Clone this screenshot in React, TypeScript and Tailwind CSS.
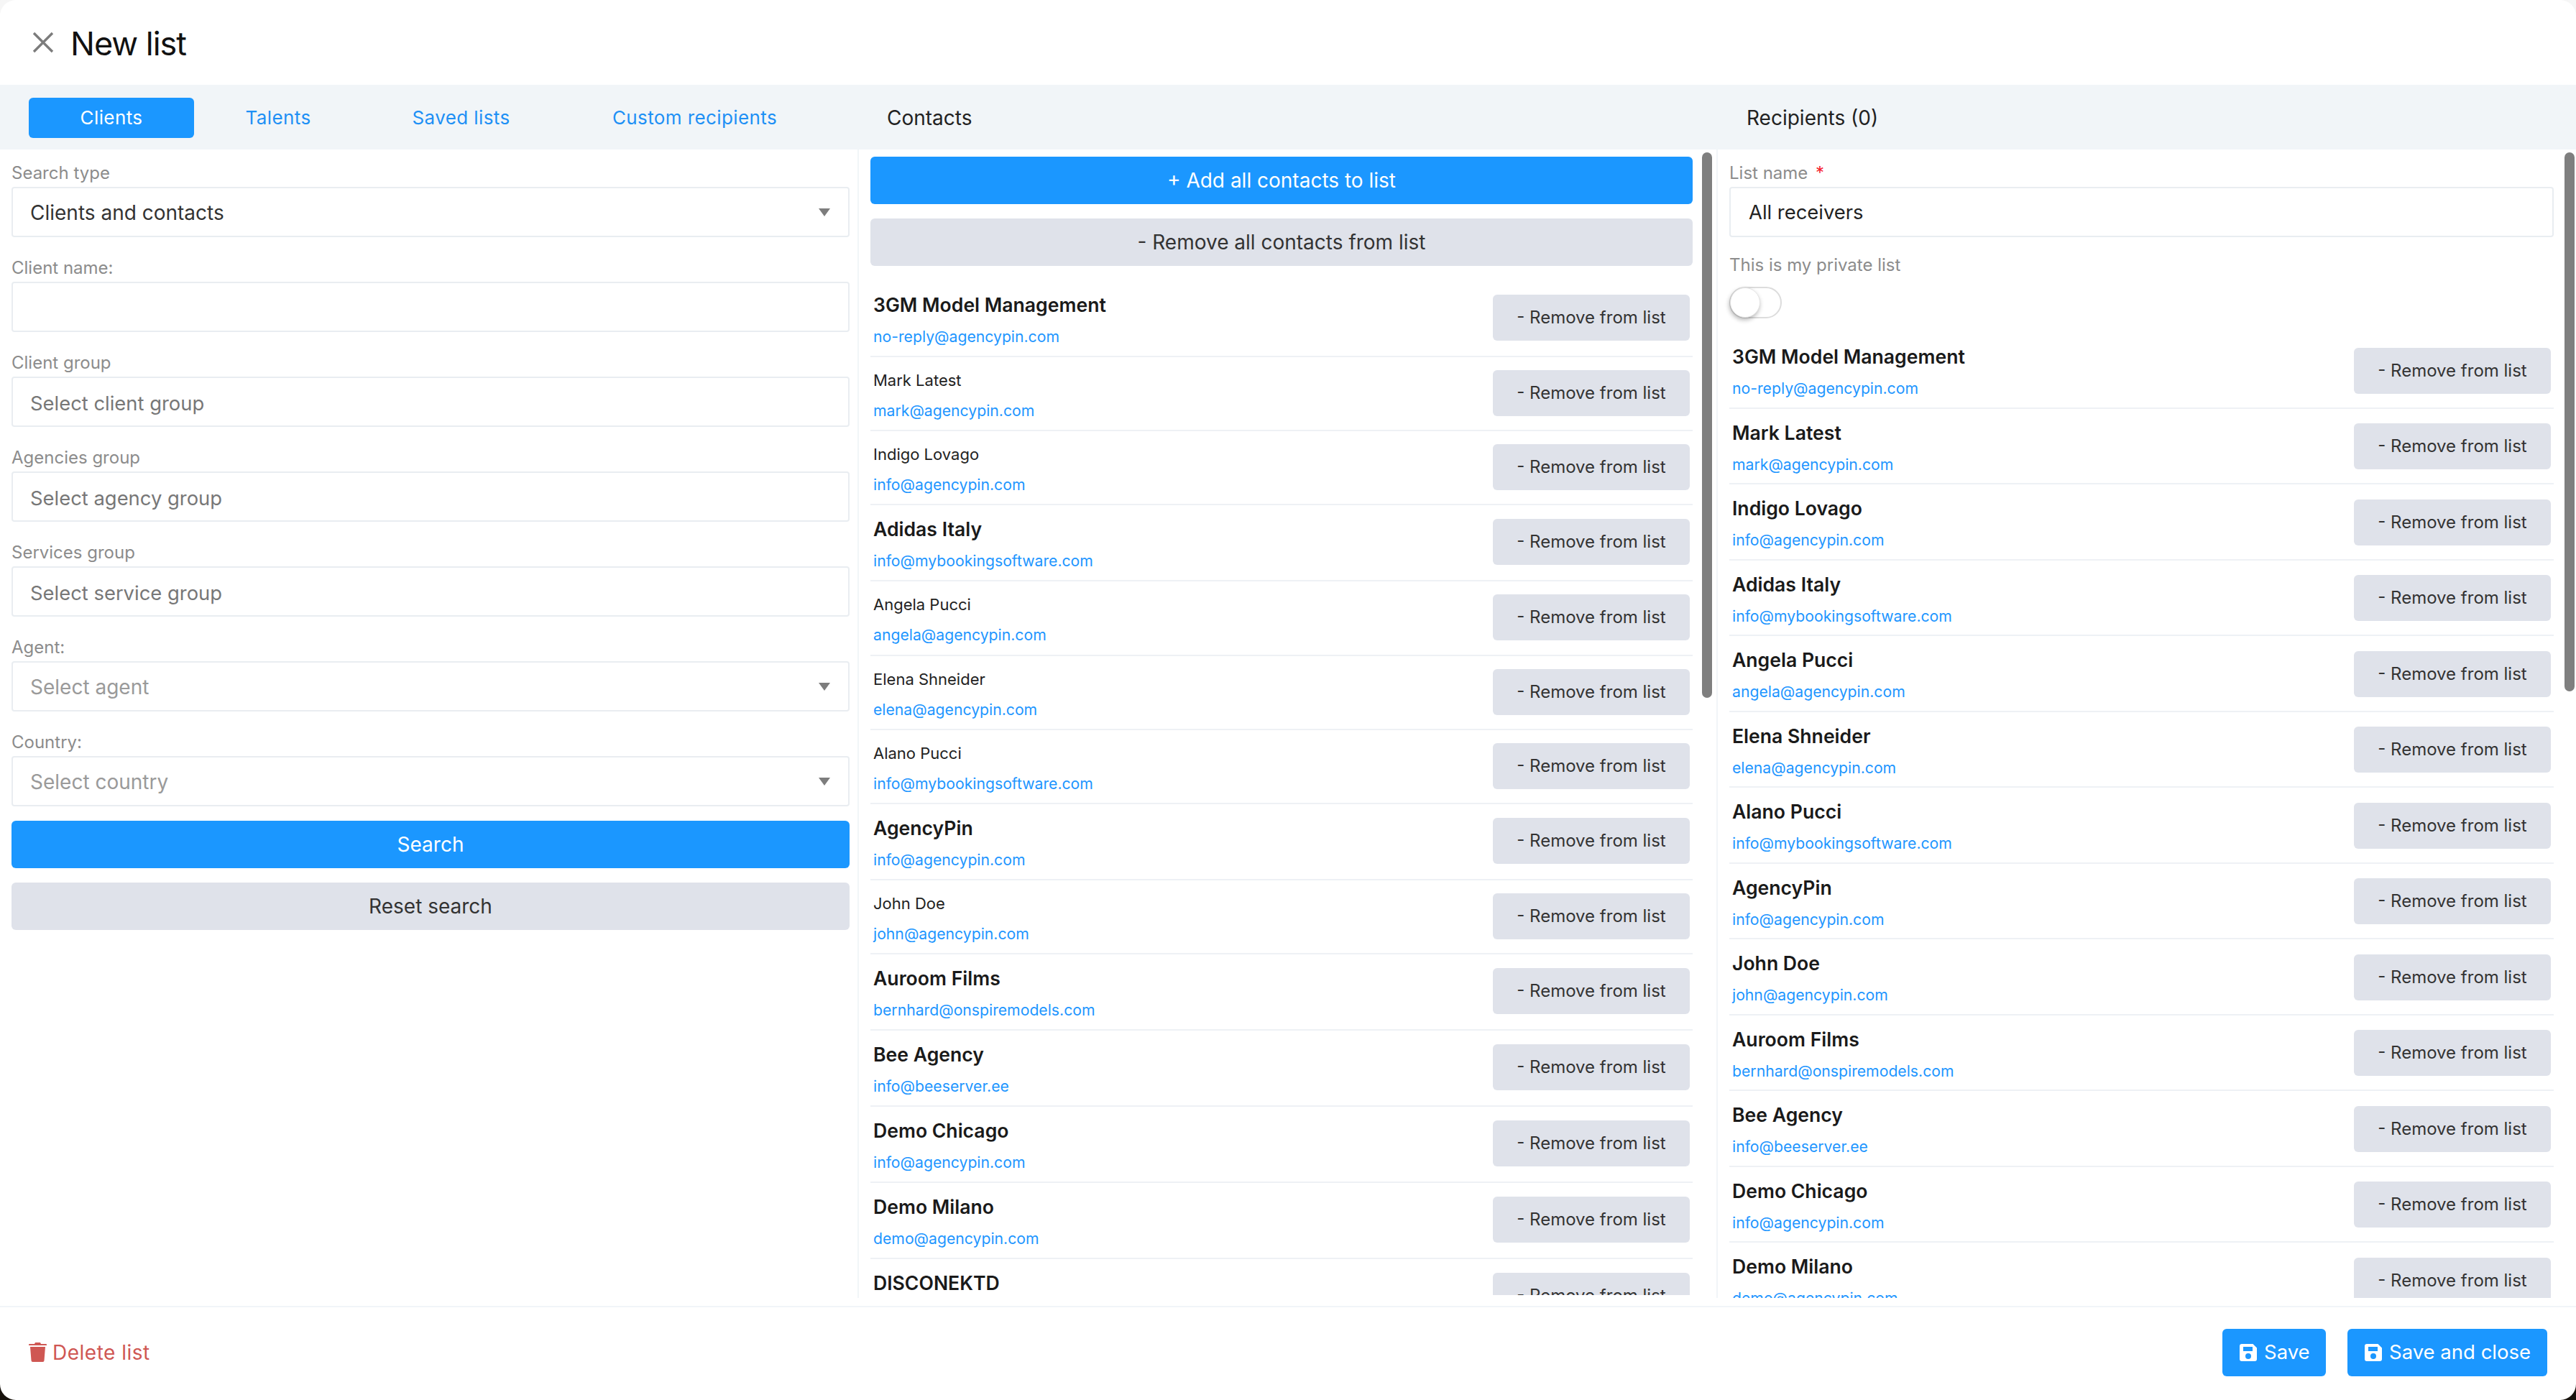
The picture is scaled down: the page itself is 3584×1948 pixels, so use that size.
const contacts = [
  { name: "3GM Model Management", email: "no-reply@agencypin.com", bold: true },
  { name: "Mark Latest", email: "mark@agencypin.com", bold: false },
  { name: "Indigo Lovago", email: "info@agencypin.com", bold: false },
  { name: "Adidas Italy", email: "info@mybookingsoftware.com", bold: true },
  { name: "Angela Pucci", email: "angela@agencypin.com", bold: false },
  { name: "Elena Shneider", email: "elena@agencypin.com", bold: false },
  { name: "Alano Pucci", email: "info@mybookingsoftware.com", bold: false },
  { name: "AgencyPin", email: "info@agencypin.com", bold: true },
  { name: "John Doe", email: "john@agencypin.com", bold: false },
  { name: "Auroom Films", email: "bernhard@onspiremodels.com", bold: true },
  { name: "Bee Agency", email: "info@beeserver.ee", bold: true },
  { name: "Demo Chicago", email: "info@agencypin.com", bold: true },
  { name: "Demo Milano", email: "demo@agencypin.com", bold: true },
  { name: "DISCONEKTD", email: "info@agencypin.com", bold: true },
];

function Arrow() {
  return (
    <svg className="h-[11px] w-[16px] shrink-0" viewBox="0 0 16 11">
      <path d="M0 0h16L8 11z" fill="#7d7d7d" />
    </svg>
  );
}

function SaveIcon() {
  return (
    <svg className="h-[24px] w-[24px] shrink-0" viewBox="0 0 24 24">
      <path
        fillRule="evenodd"
        d="M3 0h15.5L24 5.5V21a3 3 0 0 1-3 3H3a3 3 0 0 1-3-3V3a3 3 0 0 1 3-3zM5 4v6h13V4zM12 13a4 4 0 1 0 0 8 4 4 0 0 0 0-8z"
        fill="#ffffff"
      />
    </svg>
  );
}

function TrashIcon() {
  return (
    <svg className="h-[27px] w-[25px] shrink-0" viewBox="0 0 25 27">
      <path
        d="M9 0h7l1 2h7a1 1 0 0 1 1 1v1H0V3a1 1 0 0 1 1-1h7zM2 6h21l-1.5 19a2 2 0 0 1-2 2h-14a2 2 0 0 1-2-2z"
        fill="#cf5753"
      />
    </svg>
  );
}

function Field({
  label,
  value,
  tone = "placeholder",
  arrow = false,
}: {
  label: string;
  value?: string;
  tone?: "value" | "placeholder" | "muted";
  arrow?: boolean;
}) {
  const color =
    tone === "value" ? "text-[#333333]" : tone === "muted" ? "text-[#9a9a9a]" : "text-[#777777]";
  return (
    <div className="mb-[28px]">
      <div className="mb-[4px] h-[30px] text-[24px] leading-[30px] text-[#8c8c8c]">{label}</div>
      <div className="flex h-[70px] items-center justify-between rounded-[4px] border-2 border-[#e9edf1] bg-white pl-[24px] pr-[25px]">
        <span className={`leading-[34px] ${color} ${arrow ? "pt-[1px] text-[28px]" : "pt-[3px] text-[27.4px]"}`}>
          {value}
        </span>
        {arrow && <Arrow />}
      </div>
    </div>
  );
}

function ContactRow({
  name,
  email,
  bold,
  compact = false,
}: {
  name: string;
  email: string;
  bold: boolean;
  compact?: boolean;
}) {
  const padding = bold ? (compact ? "pb-[2.5px] pt-[13px]" : "pb-[3px] pt-[13px]") : "pb-[3.2px] pt-[14px]";
  return (
    <div className={`flex items-center justify-between border-b-2 border-[#eef1f5] px-[4px] ${padding}`}>
      <div className="min-w-0">
        {bold ? (
          <div className="text-[26.6px] font-semibold leading-[40px] text-[#1a1a1a]">{name}</div>
        ) : (
          <div className="text-[22px] leading-[36px] text-[#222222]">{name}</div>
        )}
        <div className="text-[21.2px] leading-[48px] text-[#1e96ff]">{email}</div>
      </div>
      <button
        className={`flex h-[64px] w-[274px] shrink-0 items-center justify-center rounded-[6px] bg-[#dfe2ea] text-[24px] text-[#333333] ${compact ? "mb-[9px]" : "mb-[12px]"}`}
      >
        - Remove from list
      </button>
    </div>
  );
}

export default function App() {
  return (
    <div className="h-[1948px] w-[3584px] overflow-hidden bg-linear-to-b from-[#f6f6f6] from-50% to-[#17120c] to-50%">
      <div
        className="flex h-full flex-col rounded-[22px] bg-white"
        style={{ fontFamily: "Inter, 'Noto Sans', sans-serif" }}
      >
        <header className="flex h-[118px] shrink-0 items-center pl-[45px]">
          <svg className="h-[30px] w-[30px]" viewBox="0 0 30 30">
            <path d="M2 2l26 26M28 2L2 28" stroke="#7c7c7c" strokeWidth="3.4" fill="none" />
          </svg>
          <h1 className="ml-[23px] mt-[3px] text-[45px] font-normal leading-[56px] tracking-[-1px] text-[#111111]">
            New list
          </h1>
        </header>

        <div className="flex h-[90px] shrink-0 items-center bg-[#f1f5f8]">
          <nav className="mt-[1px] flex w-[1234px] shrink-0 gap-[2px] pl-[40px] text-[26px] tracking-[0.4px]">
            <button className="flex h-[56px] w-[230px] items-center justify-center rounded-[6px] bg-[#1b97ff] text-white">
              Clients
            </button>
            <button className="flex h-[56px] w-[230px] items-center justify-center text-[#1e90f5]">Talents</button>
            <button className="flex h-[56px] w-[275px] items-center justify-center text-[#1e90f5]">Saved lists</button>
            <button className="flex h-[56px] w-[371px] items-center justify-center text-[#1e90f5]">
              Custom recipients
            </button>
          </nav>
          <div className="mt-[2px] w-[1196px] shrink-0 text-[28px] text-[#222222]">Contacts</div>
          <div className="mt-[2px] text-[28px] text-[#222222]">Recipients (0)</div>
        </div>

        <main className="flex h-[1598px] shrink-0">
          <section className="w-[1195px] shrink-0 border-r-2 border-[#f1f5f8] pl-[16px] pr-[11px] pt-[18px]">
            <Field label="Search type" value="Clients and contacts" tone="value" arrow />
            <Field label="Client name:" />
            <Field label="Client group" value="Select client group" />
            <Field label="Agencies group" value="Select agency group" />
            <Field label="Services group" value="Select service group" />
            <Field label="Agent:" value="Select agent" tone="muted" arrow />
            <div className="-mb-[8px]">
              <Field label="Country:" value="Select country" tone="muted" arrow />
            </div>
            <button className="flex h-[66px] w-full items-center justify-center rounded-[6px] bg-[#1b97ff] text-[28px] text-white">
              Search
            </button>
            <button className="mt-[20px] flex h-[66px] w-full items-center justify-center rounded-[6px] bg-[#dfe2ea] text-[28px] text-[#333333]">
              Reset search
            </button>
          </section>

          <section className="flex h-[1594px] w-[1193px] shrink-0 overflow-hidden pl-[16px]">
            <div className="w-[1144px] shrink-0 pt-[10px]">
              <button className="flex h-[66px] w-full items-center justify-center rounded-[6px] bg-[#1b97ff] text-[28px] text-white">
                + Add all contacts to list
              </button>
              <button className="mt-[20px] flex h-[66px] w-full items-center justify-center rounded-[6px] bg-[#dfe2ea] text-[28px] text-[#333333]">
                - Remove all contacts from list
              </button>
              <div className="mt-[21px]">
                {contacts.map((c) => (
                  <ContactRow key={c.name} {...c} />
                ))}
              </div>
            </div>
            <div className="ml-[13px] mt-[4px] h-[759px] w-[14px] shrink-0 rounded-full bg-[#7f7f7f]" />
          </section>

          <section className="flex flex-1 overflow-hidden border-l-2 border-[#f1f5f8] pl-[16px]">
            <div className="w-[1147px] shrink-0 pt-[18px]">
              <div className="mb-[4px] h-[30px] text-[24px] leading-[30px] text-[#8c8c8c]">
                List name <span className="ml-[4px] text-[#f5222d]">*</span>
              </div>
              <div className="flex h-[70px] items-center rounded-[4px] border-2 border-[#e9edf1] pl-[25px] pt-[2px] text-[27.4px] text-[#222222]">
                All receivers
              </div>
              <div className="mt-[24px] h-[30px] text-[24px] leading-[30px] text-[#8c8c8c]">This is my private list</div>
              <div className="relative mt-[15px] h-[44px] w-[73px] rounded-full border-2 border-[#dcdcdc]">
                <div className="absolute -left-[1px] -top-[1px] h-[42px] w-[42px] rounded-full border border-[#e4e4e4] bg-white shadow-[-1px_3px_6px_rgba(0,0,0,0.3)]" />
              </div>
              <div className="mt-[20px]">
                {contacts.map((c) => (
                  <ContactRow key={c.name} {...c} bold compact />
                ))}
              </div>
            </div>
            <div className="ml-[15px] mt-[4px] h-[750px] w-[14px] shrink-0 rounded-full bg-[#7f7f7f]" />
          </section>
        </main>

        <footer className="mt-[11px] flex flex-1 items-center justify-between border-t-2 border-[#f1f5f8] pb-[3px] pl-[40px] pr-[40px]">
          <button className="mb-[1px] flex items-center gap-[8px] text-[28px] tracking-[0.5px] text-[#cf5753]">
            <TrashIcon />
            Delete list
          </button>
          <div className="flex gap-[30px] text-[27.5px] text-white">
            <button className="flex h-[66px] w-[144px] items-center gap-[10px] rounded-[6px] bg-[#1b97ff] pl-[24px]">
              <SaveIcon />
              Save
            </button>
            <button className="flex h-[66px] w-[278px] items-center gap-[10px] rounded-[6px] bg-[#1b97ff] pl-[24px]">
              <SaveIcon />
              Save and close
            </button>
          </div>
        </footer>
      </div>
    </div>
  );
}
